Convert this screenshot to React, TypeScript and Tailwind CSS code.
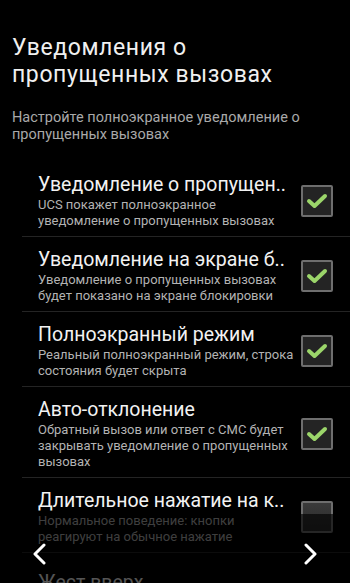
import React from 'react';

type Item = {
    title: string;
    summary: string;
    checked: boolean;
};

const items: Item[] = [
    {
        title: 'Уведомление о пропущен..',
        summary: 'UCS покажет полноэкранное уведомление о пропущенных вызовах',
        checked: true,
    },
    {
        title: 'Уведомление на экране б..',
        summary: 'Уведомление о пропущенных вызовах будет показано на экране блокировки',
        checked: true,
    },
    {
        title: 'Полноэкранный режим',
        summary: 'Реальный полноэкранный режим, строка состояния будет скрыта',
        checked: true,
    },
    {
        title: 'Авто-отклонение',
        summary: 'Обратный вызов или ответ с СМС будет закрывать уведомление о пропущенных вызовах',
        checked: true,
    },
    {
        title: 'Длительное нажатие на к..',
        summary: 'Нормальное поведение: кнопки реагируют на обычное нажатие',
        checked: false,
    },
    {
        title: 'Жест вверх',
        summary: '',
        checked: false,
    },
];

const CheckBox = ({ checked }: { checked: boolean }) => (
    <div
        className={`w-8 h-8 shrink-0 rounded-[2px] border-2 border-[#6e6e6e] flex items-center justify-center ${
            checked ? 'bg-[#242424]' : 'bg-gradient-to-b from-[#3a3a3a] to-[#2a2a2a]'
        }`}
    >
        {checked && (
            <svg width="22" height="18" viewBox="0 0 22 18">
                <polyline
                    points="3,9 8.5,14 19,4"
                    fill="none"
                    stroke="#9bd56a"
                    strokeWidth="4"
                    strokeLinecap="round"
                    strokeLinejoin="round"
                />
            </svg>
        )}
    </div>
);

const Arrow = ({ dir }: { dir: 'left' | 'right' }) => (
    <svg width="15" height="22" viewBox="0 0 15 22">
        <polyline
            points={dir === 'left' ? '12,2 3,11 12,20' : '3,2 12,11 3,20'}
            fill="none"
            stroke="#ffffff"
            strokeWidth="3"
            strokeLinecap="round"
            strokeLinejoin="round"
        />
    </svg>
);

export default function App() {
    return (
        <div className="relative w-[350px] h-[583px] overflow-hidden bg-black font-['Roboto','Noto_Sans',sans-serif]">
            {/* Header */}
            <div className="px-3 pt-[34px]">
                <h1 className="text-[23px] leading-[27px] tracking-[0.6px] text-[#f0f0f0] font-normal">
                    Уведомления о пропущенных вызовах
                </h1>
                <p className="mt-[21px] text-[14.5px] leading-[17px] text-[#a9a9a9]">
                    Настройте полноэкранное уведомление о пропущенных вызовах
                </p>
            </div>

            {/* Preferences */}
            <div className="ml-[22px] mt-[19px]">
                {items.map((item, i) => (
                    <div
                        key={i}
                        className={`flex items-center gap-1 pl-4 pr-[17px] pb-[7px] border-b border-[#242424] ${
                            item.summary ? 'pt-[11px]' : 'pt-[18px]'
                        }`}
                    >
                        <div className="flex-1 min-w-0">
                            <div className="text-[19.5px] leading-[24px] text-[#f2f2f2] whitespace-nowrap">
                                {item.title}
                            </div>
                            {item.summary && (
                                <div className="text-[13px] leading-[16px] text-[#b3b3b3]">
                                    {item.summary}
                                </div>
                            )}
                        </div>
                        {item.summary && <CheckBox checked={item.checked} />}
                    </div>
                ))}
            </div>

            {/* Bottom pager overlay */}
            <div className="absolute left-0 right-0 top-[514px] bottom-0 bg-black/65">
                <div className="flex justify-between px-8 pt-[29px]">
                    <Arrow dir="left" />
                    <Arrow dir="right" />
                </div>
            </div>
        </div>
    );
}
